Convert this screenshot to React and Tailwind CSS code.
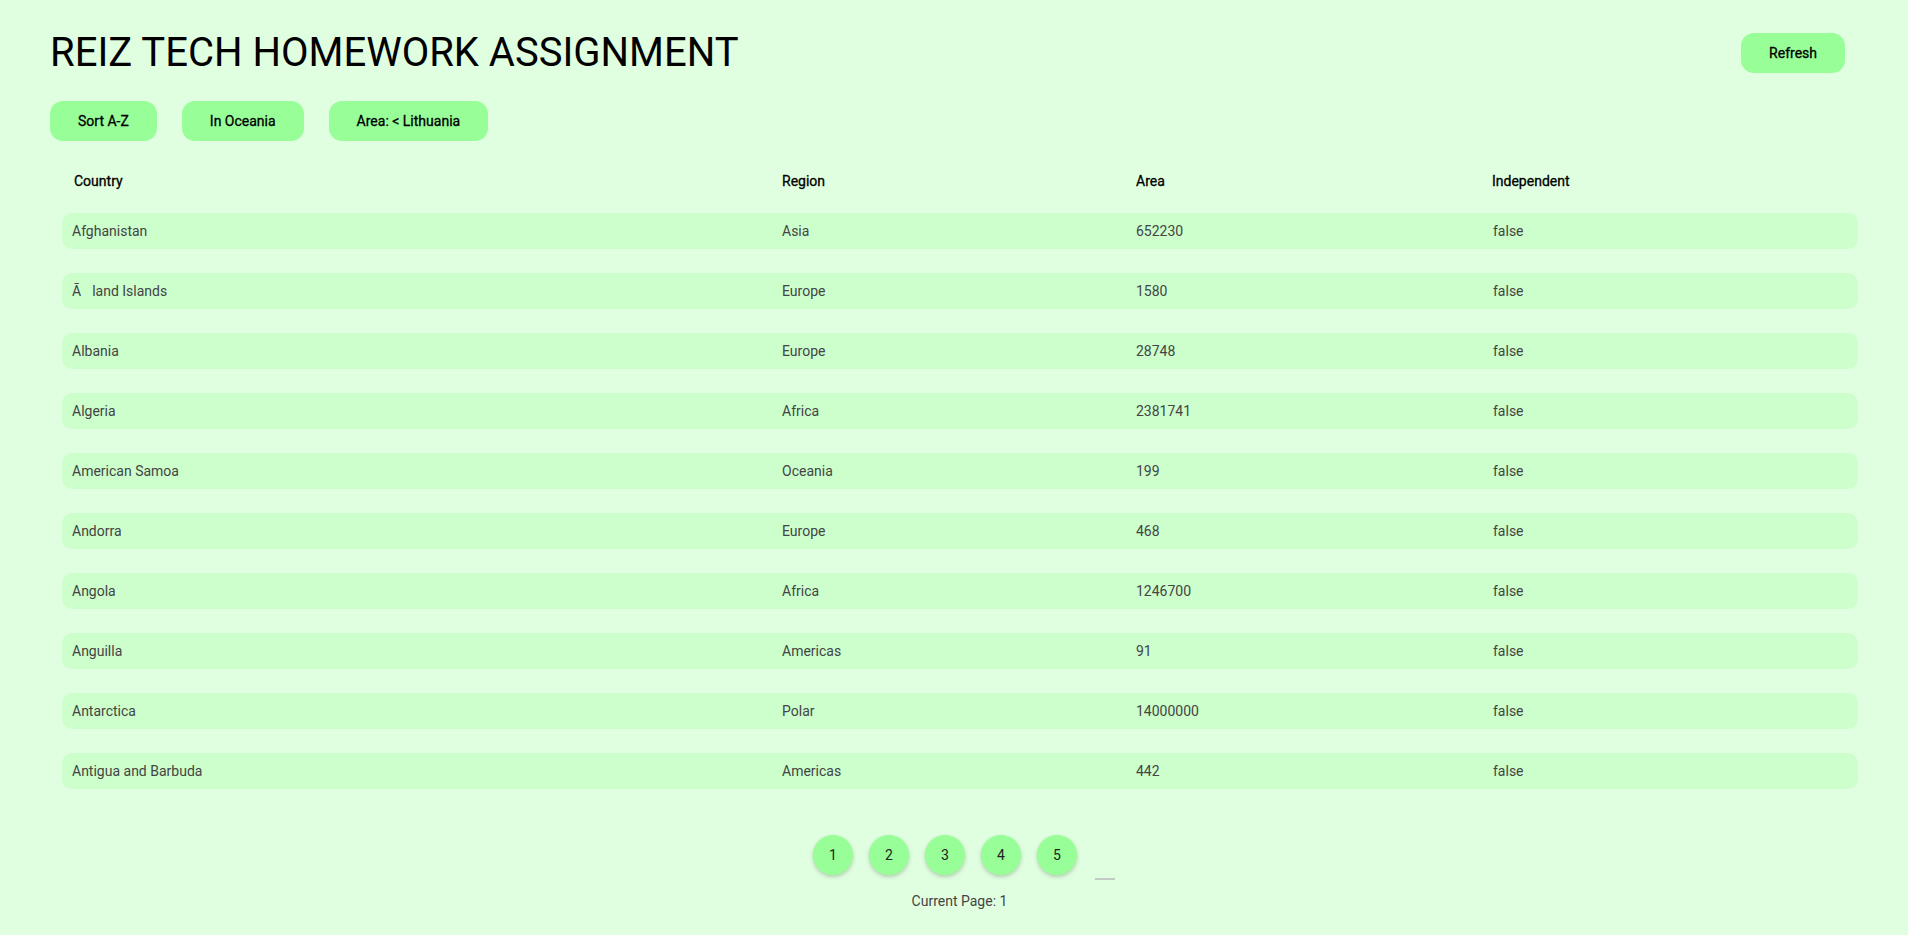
import React, { useState } from "react";

const countries = [
  { name: "Afghanistan", region: "Asia", area: 652230, independent: false },
  { name: "\u00C3\u0085land Islands", region: "Europe", area: 1580, independent: false },
  { name: "Albania", region: "Europe", area: 28748, independent: false },
  { name: "Algeria", region: "Africa", area: 2381741, independent: false },
  { name: "American Samoa", region: "Oceania", area: 199, independent: false },
  { name: "Andorra", region: "Europe", area: 468, independent: false },
  { name: "Angola", region: "Africa", area: 1246700, independent: false },
  { name: "Anguilla", region: "Americas", area: 91, independent: false },
  { name: "Antarctica", region: "Polar", area: 14000000, independent: false },
  { name: "Antigua and Barbuda", region: "Americas", area: 442, independent: false },
];

const App = () => {
  const [page, setPage] = useState(1);

  return (
    <div className="min-h-screen bg-[#e0ffe0] px-[50px] font-['Roboto',sans-serif]">
      {/* Header */}
      <div className="flex items-center justify-between pt-[29px]">
        <h1 className="text-[40px] leading-[48px] font-normal text-black">
          REIZ TECH HOMEWORK ASSIGNMENT
        </h1>
        <button className="mr-[13px] h-10 px-[28px] rounded-[13px] bg-[#98fe98] text-sm text-black [-webkit-text-stroke:0.3px_black]">
          Refresh
        </button>
      </div>

      {/* Filters */}
      <div className="flex gap-[25px] mt-[24px]">
        <button className="h-10 px-7 rounded-[13px] bg-[#98fe98] text-sm text-black [-webkit-text-stroke:0.3px_black]">
          Sort A-Z
        </button>
        <button className="h-10 px-7 rounded-[13px] bg-[#98fe98] text-sm text-black [-webkit-text-stroke:0.3px_black]">
          In Oceania
        </button>
        <button className="h-10 px-7 rounded-[13px] bg-[#98fe98] text-sm text-black [-webkit-text-stroke:0.3px_black]">
          Area: &lt; Lithuania
        </button>
      </div>

      {/* Table */}
      <div className="ml-[12px] mt-[22px]">
        <div className="grid grid-cols-[720px_354px_356px_1fr] h-[36px] items-center text-sm text-black [-webkit-text-stroke:0.3px_black]">
          <div className="pl-[12px]">Country</div>
          <div>Region</div>
          <div>Area</div>
          <div>Independent</div>
        </div>
        <div className="flex flex-col gap-6 mt-[14px]">
          {countries.map((c) => (
            <div
              key={c.name}
              className="grid grid-cols-[720px_354px_356px_1fr] h-[36px] items-center rounded-[10px] bg-[#ccffcc] text-sm text-[#444]"
            >
              <div className="pl-[10px]">{c.name}</div>
              <div>{c.region}</div>
              <div>{c.area}</div>
              <div className="pl-[1px]">{String(c.independent)}</div>
            </div>
          ))}
        </div>
      </div>

      {/* Pagination */}
      <div className="flex items-start justify-center pl-[20px] mt-[46px]">
        <div className="flex gap-4">
          {[1, 2, 3, 4, 5].map((n) => (
            <button
              key={n}
              onClick={() => setPage(n)}
              className="w-10 h-10 rounded-full bg-[#98fe98] text-sm text-[#222] shadow-[0_2px_4px_rgba(0,0,0,0.2)] flex items-center justify-center"
            >
              {n}
            </button>
          ))}
        </div>
        <div className="ml-[18px] mt-[43px] w-[20px] h-[2px] bg-[#c2cbc2]" />
      </div>
      <div className="text-center pl-[11px] mt-[11px] text-sm leading-5 text-[#444]">
        Current Page: {page}
      </div>
    </div>
  );
};

export default App;
